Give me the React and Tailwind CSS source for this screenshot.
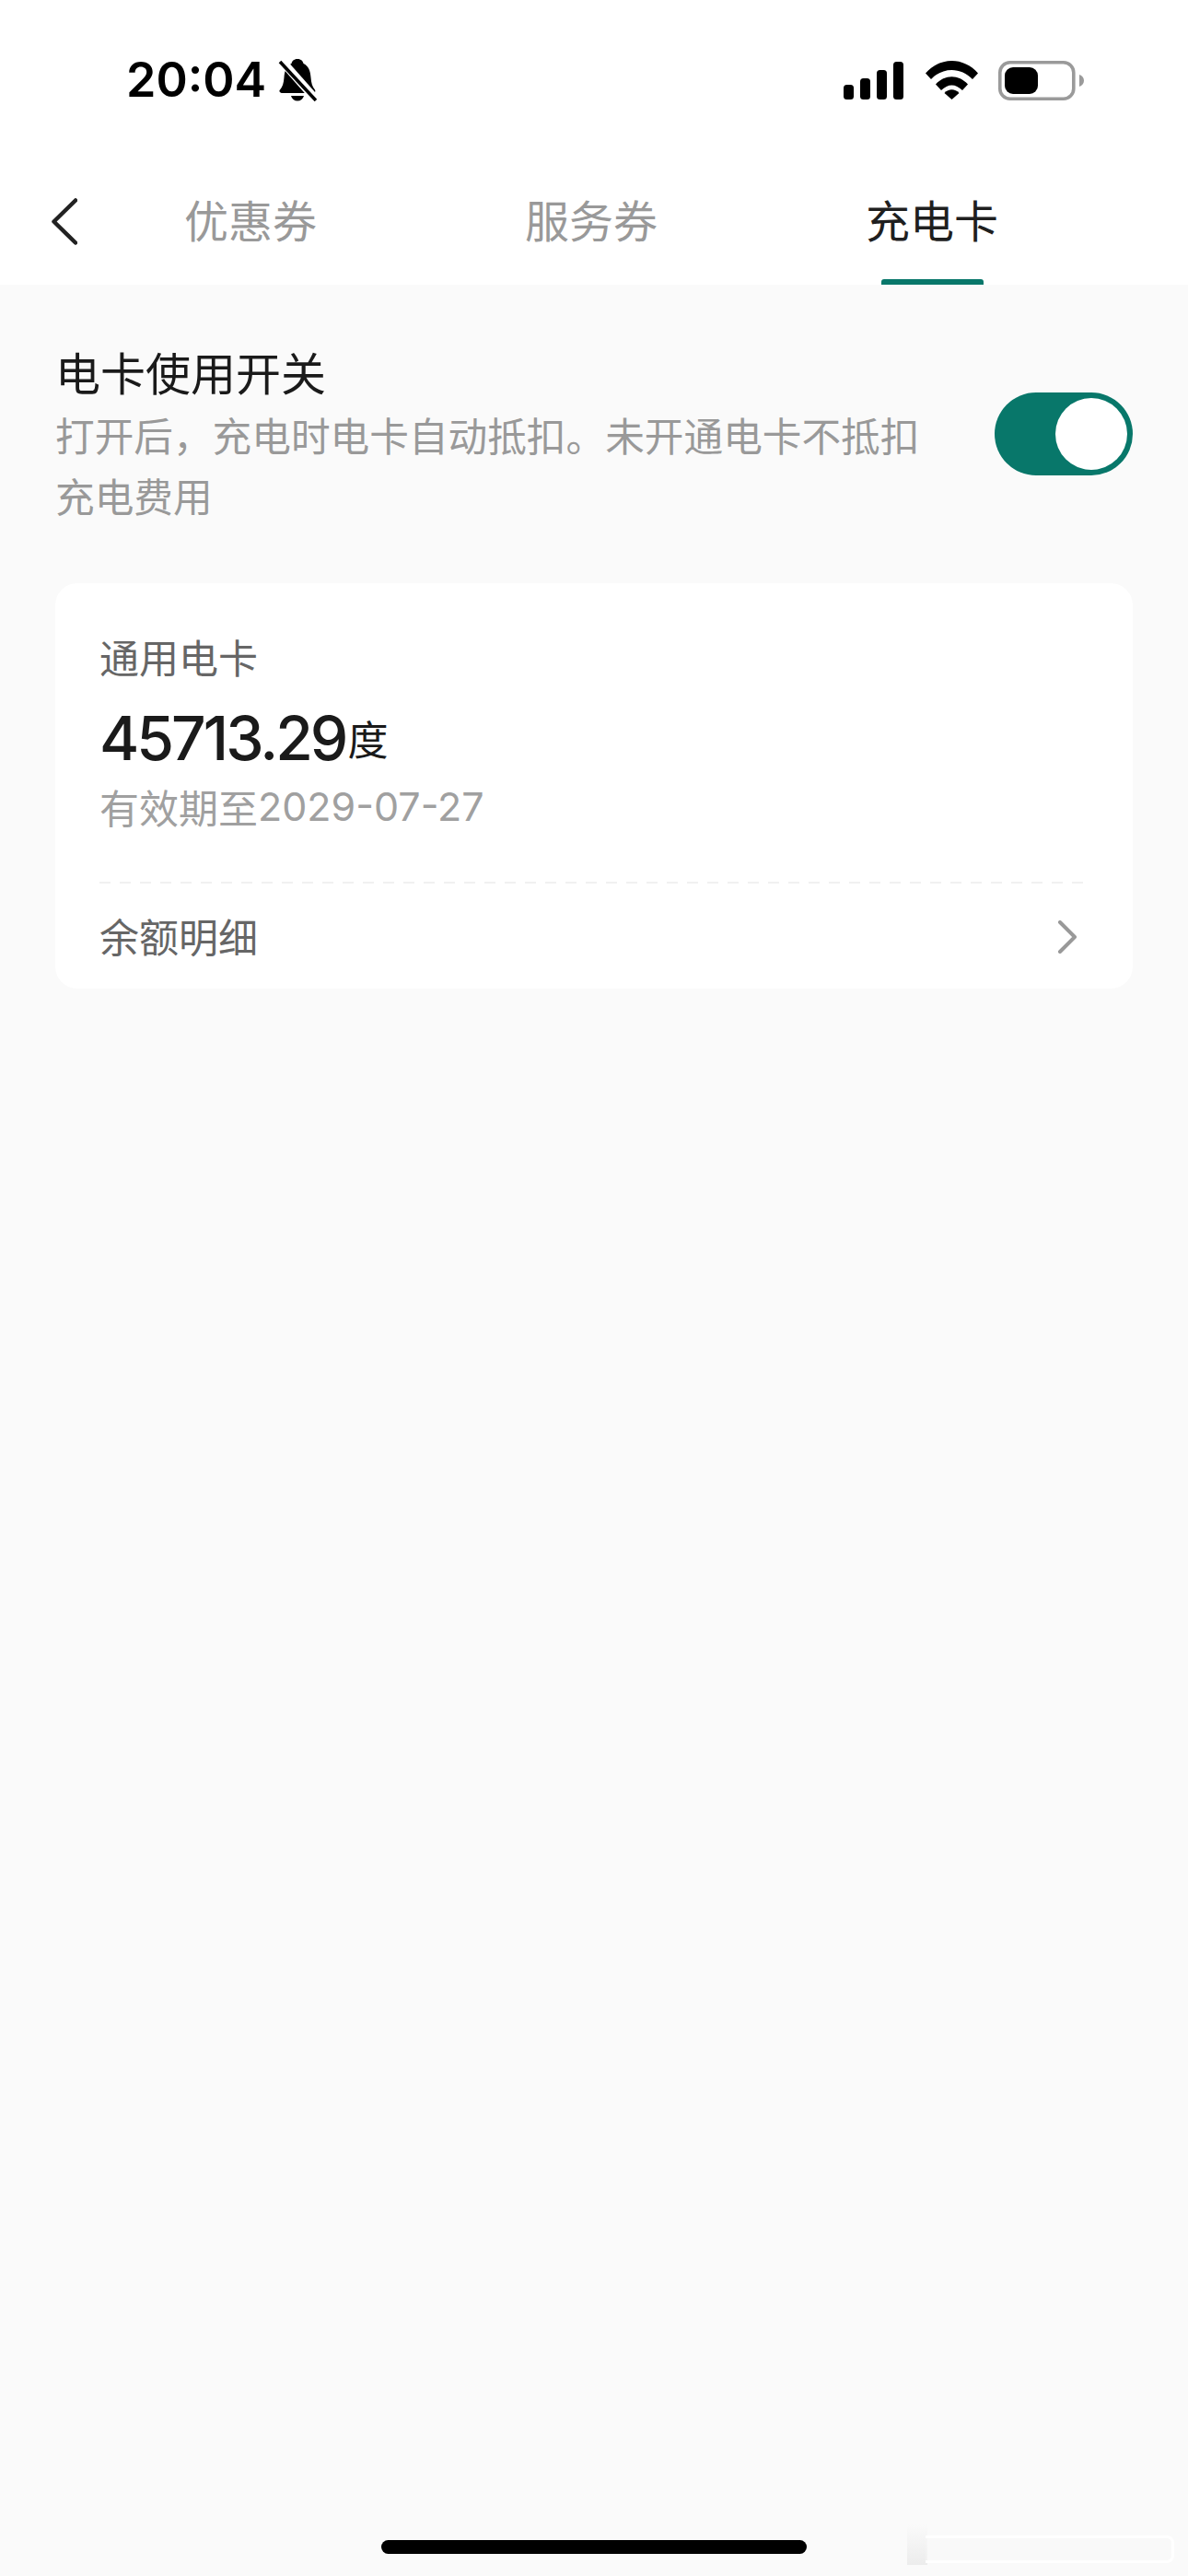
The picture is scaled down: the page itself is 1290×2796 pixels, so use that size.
import React from 'react';

const cjk = "font-['Noto_Sans_CJK_SC',sans-serif]";

function SignalIcon() {
  return (
    <svg width="65" height="41" viewBox="0 0 65 41" fill="#000">
      <rect x="0" y="25" width="11" height="16" rx="3.5" />
      <rect x="18" y="18" width="11" height="23" rx="3.5" />
      <rect x="36" y="9" width="11" height="32" rx="3.5" />
      <rect x="54" y="0" width="11" height="41" rx="3.5" />
    </svg>
  );
}

function WifiIcon() {
  return (
    <svg width="57" height="42" viewBox="0 0 57 42" fill="#000">
      <path d="M0 13.500C15.500 -4.500 41.500 -4.500 57 13.500L51 20C38.500 6.500 18.500 6.500 6 20Z" />
      <path d="M11 25.500C21 14.500 36 14.500 46 25.500L40 32C32.500 24.500 24.500 24.500 17 32Z" />
      <path d="M20.500 35C25 30 32 30 36.500 35L28.500 42Z" />
    </svg>
  );
}

function BatteryIcon() {
  return (
    <svg width="93" height="43" viewBox="0 0 93 43" fill="none">
      <rect x="1.800" y="1.800" width="80" height="39.400" rx="11" stroke="#9a9a9a" strokeWidth="3.600" />
      <rect x="7" y="7" width="36" height="29" rx="9" fill="#000" />
      <path d="M88 15C91 16 93 18.500 93 21.500C93 24.500 91 27 88 28Z" fill="#9a9a9a" />
    </svg>
  );
}

function MutedBell() {
  return (
    <svg width="42" height="46" viewBox="0 0 42 46" fill="#000">
      <path d="M21 0C25 0 27 2.500 27.500 5C33 7.500 35 13 35.500 20C36 26 37 30 40 33.500C41 35 40 37 38 37H5C2 37 0.500 35 2 33.500C5 30 6 26 6.500 20C7 13 9 7.500 14.500 5C15 2.500 17 0 21 0Z" />
      <path d="M14 40H28C27 43.500 24.500 45.500 21 45.500C17.500 45.500 15 43.500 14 40Z" />
      <path d="M3 1L41 44" stroke="#fff" strokeWidth="9" />
      <path d="M2 3L41 45" stroke="#000" strokeWidth="3.600" />
    </svg>
  );
}

function StatusBar() {
  return (
    <div className="h-[174px] flex items-center justify-between pl-[137px] pr-[113px]">
      <div className="flex items-center gap-[13px]">
        <span className="font-['Inter',sans-serif] font-semibold text-[52px] leading-none text-black">20:04</span>
        <MutedBell />
      </div>
      <div className="flex items-center">
        <SignalIcon />
        <div className="ml-[24px]"><WifiIcon /></div>
        <div className="ml-[22px]"><BatteryIcon /></div>
      </div>
    </div>
  );
}

function Tab({ label, active }) {
  return (
    <div className="w-[370px] h-full flex flex-col items-center">
      <div className={`flex-1 flex items-center pb-[4px] text-[48px] leading-none ${active ? 'text-[#1f1f1f]' : 'text-[#999999]'}`}>
        {label}
      </div>
      {active ? <div className="w-[111px] h-[6px] rounded-t-[3px] bg-[#08776a]" /> : <div className="h-[6px]" />}
    </div>
  );
}

function TabBar() {
  return (
    <div className="h-[135px] flex items-center">
      <div className="w-[87px] pl-[56px] pb-[3px] flex items-center">
        <svg width="28" height="51" viewBox="0 0 28 51" fill="none">
          <path d="M26 2.500L2.500 25.500L26 48.500" stroke="#222222" strokeWidth="4.500" strokeLinecap="round" strokeLinejoin="round" />
        </svg>
      </div>
      <Tab label="优惠券" />
      <Tab label="服务券" />
      <Tab label="充电卡" active />
    </div>
  );
}

function Toggle() {
  return (
    <div className="w-[150px] h-[90px] rounded-full bg-[#08776a] flex items-center justify-end pr-[6px]">
      <div className="w-[78px] h-[78px] rounded-full bg-white" />
    </div>
  );
}

function CardSummary() {
  return (
    <div className="rounded-[24px] bg-white mt-[62px] px-[48px] h-[440px] flex flex-col">
      <div className="mt-[49px] h-[60px] flex items-center text-[43px] leading-none text-[#666666]">通用电卡</div>
      <div className="mt-[24px] h-[70px] flex items-center text-[#1a1a1a]">
        <span className="font-['Inter',sans-serif] font-medium text-[66px] leading-[70px] tracking-[-3px]">45713.29</span>
        <span className="ml-[2px] text-[44px] leading-none">度</span>
      </div>
      <div className="mt-[9px] h-[60px] flex items-center text-[43px] leading-none text-[#a0a0a0]">
        有效期至<span className="font-['Inter',sans-serif]">2029-07-27</span>
      </div>
      <div className="mt-[52px] h-[2px] bg-[repeating-linear-gradient(90deg,#f1f1f1_0,#f1f1f1_12px,transparent_12px,transparent_22px)]" />
      <div className="flex-1 flex items-center justify-between pr-[12px] pb-[2px]">
        <span className="text-[43px] leading-none text-[#666666]">余额明细</span>
        <svg className="mt-[3px]" width="22" height="36" viewBox="0 0 22 36" fill="none">
          <path d="M3 2L19 18L3 34" stroke="#999999" strokeWidth="4" strokeLinecap="round" strokeLinejoin="round" />
        </svg>
      </div>
    </div>
  );
}

export default function App() {
  return (
    <div className={`relative w-[1290px] h-[2796px] bg-[#fafafa] flex flex-col overflow-hidden ${cjk}`}>
      <div className="h-[309px] bg-white flex flex-col">
        <StatusBar />
        <TabBar />
      </div>

      <div className="flex-1 px-[60px] pt-[61px]">
        <div className="flex items-center justify-between">
          <div className="w-[960px]">
            <div className="text-[49px] leading-[66px] text-[#1a1a1a]">电卡使用开关</div>
            <div className="mt-[3px] text-[42.67px] leading-[66px] text-[#999999]">
              打开后，充电时电卡自动抵扣。未开通电卡不抵扣充电费用
            </div>
          </div>
          <Toggle />
        </div>
        <CardSummary />
      </div>

      {/* home bar */}
      <div className="flex justify-center pb-[24px]">
        <div className="w-[462px] h-[15px] rounded-[8px] bg-black" />
      </div>

      {/* faint screenshot artefact next to the home bar */}
      <div className="absolute left-[985px] top-[2740px] w-[22px] h-[44px] bg-gradient-to-b from-transparent to-[#ececec]" />
      <div className="absolute left-[1005px] top-[2752px] w-[270px] h-[30px] rounded-r-[8px] border-y-[3px] border-r-[3px] border-white bg-[#f7f7f7]/40" />
    </div>
  );
}
